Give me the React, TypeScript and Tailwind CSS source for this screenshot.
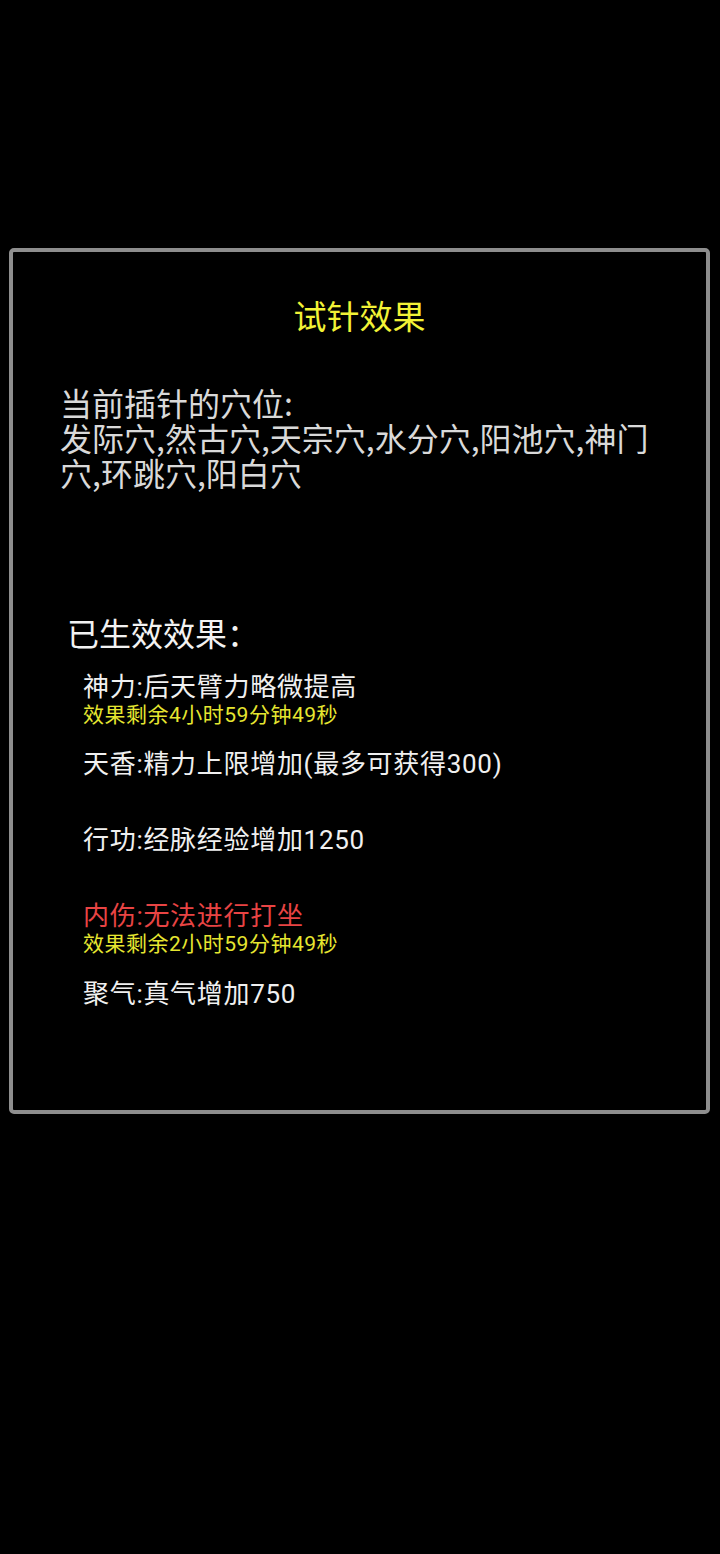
import React from "react";

const font = { fontFamily: '"Noto Sans CJK SC", "Noto Sans", sans-serif' };
const mixed = { fontFamily: 'Roboto, "Noto Sans CJK SC", sans-serif' };

type Effect = { main: string; sub?: string; red?: boolean; h: string };

const effects: Effect[] = [
  { main: "神力:后天臂力略微提高", sub: "效果剩余4小时59分钟49秒", h: "h-[77px]" },
  { main: "天香:精力上限增加(最多可获得300)", h: "h-[76px]" },
  { main: "行功:经脉经验增加1250", h: "h-[76px]" },
  { main: "内伤:无法进行打坐", sub: "效果剩余2小时59分钟49秒", red: true, h: "h-[78px]" },
  { main: "聚气:真气增加750", h: "h-[77px]" },
];

export default function App() {
  return (
    <div className="w-[720px] h-[1554px] bg-black overflow-hidden" style={font}>
      <div className="pt-[248px] pl-[9px]">
        <div className="w-[701px] h-[866px] border-[4px] border-[#8e8e8e] rounded-[5px] bg-black flex flex-col">
          <div className="pt-[43px] text-center text-[33px] leading-[40px] text-[#f2f236]">
            试针效果
          </div>
          <div className="mt-[50px] pl-[47px] text-[32px] leading-[35px] text-[#d9d9d9] whitespace-nowrap">
            <div>当前插针的穴位:</div>
            <div>发际穴,然古穴,天宗穴,水分穴,阳池穴,神门</div>
            <div>穴,环跳穴,阳白穴</div>
          </div>
          <div className="mt-[122px] pl-[54px] text-[32px] leading-[40px] text-[#f2f2f2]">
            已生效效果：
          </div>
          <div className="mt-[19px] pl-[70px] flex flex-col" style={mixed}>
            {effects.map((e, i) => (
              <div key={i} className={e.h + " flex flex-col"}>
                <div
                  className={
                    "text-[26px] leading-[32px] tracking-[0.7px] whitespace-nowrap " +
                    (e.red ? "text-[#e84444]" : "text-[#f0f0f0]")
                  }
                >
                  {e.main}
                </div>
                {e.sub && (
                  <div className="text-[21px] leading-[24px] tracking-[0.5px] text-[#e6e630] whitespace-nowrap">
                    {e.sub}
                  </div>
                )}
              </div>
            ))}
          </div>
        </div>
      </div>
    </div>
  );
}
